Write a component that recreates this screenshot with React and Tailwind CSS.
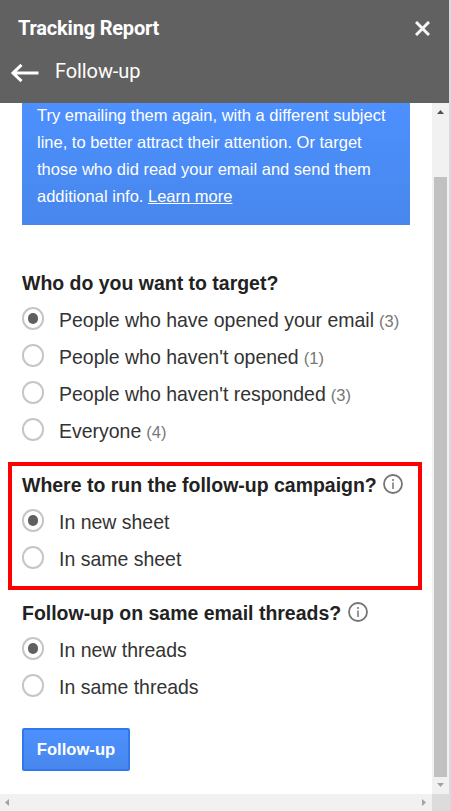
import React, { useState } from 'react';

const questions = [
  {
    id: 'target',
    title: 'Who do you want to target?',
    options: [
      { label: 'People who have opened your email', count: 3 },
      { label: "People who haven't opened", count: 1 },
      { label: "People who haven't responded", count: 3 },
      { label: 'Everyone', count: 4 },
    ],
  },
  {
    id: 'sheet',
    title: 'Where to run the follow-up campaign?',
    info: true,
    highlighted: true,
    options: [{ label: 'In new sheet' }, { label: 'In same sheet' }],
  },
  {
    id: 'threads',
    title: 'Follow-up on same email threads?',
    info: true,
    options: [{ label: 'In new threads' }, { label: 'In same threads' }],
  },
];

function InfoIcon() {
  return (
    <svg width="20" height="20" viewBox="0 0 20 20" fill="none" className="ml-[6.500px] shrink-0 -translate-y-px">
      <circle cx="10" cy="10" r="9" stroke="#757575" strokeWidth="1.8" />
      <path d="M10 8.600V15M10 5v2" stroke="#858585" strokeWidth="1.7" />
    </svg>
  );
}

function Radio({ label, count, checked, onClick }) {
  return (
    <button role="radio" aria-checked={checked} onClick={onClick} className="flex h-[37px] items-center text-left">
      <span className="flex h-[23px] w-[22px] -translate-y-px items-center justify-center rounded-full border-2 border-[#c6c6c6] bg-white">
        {checked && <span className="h-[11px] w-[10px] rounded-full bg-[#606060]" />}
      </span>
      <span className="ml-[15px] translate-y-px whitespace-nowrap text-[19.480px] leading-[37px] text-[#333]">
        {label}
        {count && <span className="ml-[5px] text-[16.500px] text-[#777]">({count})</span>}
      </span>
    </button>
  );
}

function Question({ title, info, highlighted, options }) {
  const [selected, setSelected] = useState(0);

  return (
    <section
      className={
        highlighted
          ? 'mb-[9px] ml-2 mr-[10px] mt-[13px] h-32 border-4 border-[#ff0000] pl-[10px] pt-[5px]'
          : 'px-[22px]'
      }
    >
      <h2 className="flex h-7 items-center whitespace-nowrap text-[19.480px] font-bold text-[#222]">
        <span className="translate-y-px">{title}</span>
        {info && <InfoIcon />}
      </h2>
      <div role="radiogroup" aria-label={title} className="mt-1 flex flex-col items-start">
        {options.map((option, i) => (
          <Radio key={option.label} {...option} checked={selected === i} onClick={() => setSelected(i)} />
        ))}
      </div>
    </section>
  );
}

function Header() {
  return (
    <header className="h-[103px] shrink-0 bg-[#616161] font-['Roboto',sans-serif] text-white">
      <div className="flex h-14 items-center justify-between pl-[18px] pr-[19px]">
        <h1 className="text-[20px] font-bold tracking-[-0.2px]">Tracking Report</h1>
        <button aria-label="Close">
          <svg width="15" height="15" viewBox="0 0 15 15" stroke="#f5f5f5" strokeWidth="3">
            <path d="M1 1l13 13M14 1L1 14" />
          </svg>
        </button>
      </div>
      <div className="flex h-[31px] items-center pl-[10px]">
        <button aria-label="Back" className="translate-y-px">
          <svg width="29" height="20" viewBox="0 0 29 20" fill="none" stroke="#fff" strokeWidth="3">
            <path d="M28.500 10H3M11.500 1.800L3 10l8.500 8.200" />
          </svg>
        </button>
        <span className="ml-[16px] -translate-y-px text-[20px] tracking-[-0.1px]">Follow-up</span>
      </div>
    </header>
  );
}

function VerticalScrollbar() {
  return (
    <div className="flex w-[17px] shrink-0 flex-col items-center bg-[#f1f1f1]">
      <svg width="17" height="74" viewBox="0 0 17 74" fill="#505050">
        <path d="M8.500 7L12 11H5z" />
      </svg>
      <div className="w-[13px] flex-1 bg-[#c1c1c1]" />
      <svg width="17" height="17" viewBox="0 0 17 17" fill="#a3a3a3">
        <path d="M5 6h7l-3.500 4z" />
      </svg>
    </div>
  );
}

function HorizontalScrollbar() {
  return (
    <div className="flex h-[17px] shrink-0 bg-[#dcdcdc]">
      <div className="flex w-[432px] items-center justify-between bg-[#f1f1f1]">
        <svg width="17" height="17" viewBox="0 0 17 17" fill="#a3a3a3">
          <path d="M5 8.500L9 5v7z" />
        </svg>
        <svg width="17" height="17" viewBox="0 0 17 17" fill="#a3a3a3">
          <path d="M7 5l4 3.500L7 12z" />
        </svg>
      </div>
    </div>
  );
}

export default function App() {
  return (
    <div className="flex h-[811px] w-[451px] flex-col overflow-hidden border-r-2 border-[#d9d9e0] bg-white font-['Liberation_Sans',Arial,sans-serif]">
      <Header />
      <div className="flex h-[691px] shrink-0">
        <main className="w-[432px] overflow-hidden">
          <div className="mx-[22px] h-[122px] bg-linear-to-b from-[#4d90fe] to-[#4787ed] pl-[15px] text-[16.500px] leading-[27px] text-white">
            <p className="-translate-y-px whitespace-nowrap">
              Try emailing them again, with a different subject
              <br />
              line, to better attract their attention. Or target
              <br />
              those who did read your email and send them
              <br />
              additional info. <a className="underline">Learn more</a>
            </p>
          </div>
          <div className="pt-11">
            {questions.map((q) => (
              <Question key={q.id} {...q} />
            ))}
          </div>
          <button className="ml-[22px] mt-[23px] h-[43px] w-[108px] rounded-[2px] border-2 border-[#3079ed] bg-linear-to-b from-[#4d90fe] to-[#4787ed] pt-0.5 text-[16.600px] font-bold text-white">
            Follow-up
          </button>
        </main>
        <VerticalScrollbar />
      </div>
      <HorizontalScrollbar />
    </div>
  );
}
